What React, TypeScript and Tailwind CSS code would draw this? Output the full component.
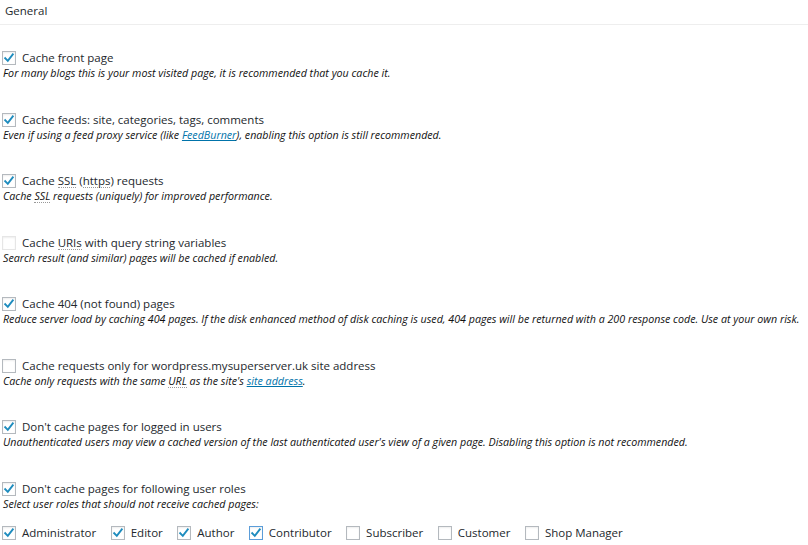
import React from 'react';

type Box = { checked?: boolean; disabled?: boolean; focused?: boolean };

const CheckBox = ({ checked, disabled, focused }: Box) => (
  <span
    className={`inline-flex items-center justify-center w-[14px] h-[14px] shrink-0 bg-white border shadow-[inset_0_1px_2px_rgba(0,0,0,0.07)] ${
      disabled ? 'border-[#e6e6e6] bg-[#fdfdfd]' : focused ? 'border-[#5b9dd9] shadow-[0_0_2px_rgba(30,140,190,0.8)]' : 'border-[#b4b9be]'
    }`}
  >
    {checked && (
      <svg width="12" height="12" viewBox="0 0 12 12" fill="none">
        <path d="M2.2 6.2 L4.8 8.8 L9.8 2.4" stroke="#1e8cbe" strokeWidth="1.9" strokeLinecap="square" />
      </svg>
    )}
  </span>
);

const Abbr = ({ children }: { children: React.ReactNode }) => (
  <span className="border-b border-dotted border-[#999] leading-[12px] inline-block">{children}</span>
);

const Link = ({ children }: { children: React.ReactNode }) => (
  <span className="text-[#0073aa] underline">{children}</span>
);

const Option = ({ box, label, desc }: { box: Box; label: React.ReactNode; desc: React.ReactNode }) => (
  <div className="mb-[31.5px]">
    <div className="flex items-center gap-[6px] pl-[2px] leading-[16px] text-[11.5px] text-[#23282d]">
      <CheckBox {...box} />
      <span>{label}</span>
    </div>
    <p className="pl-[3px] leading-[14px] text-[10.7px] italic text-[#111] whitespace-nowrap">{desc}</p>
  </div>
);

const roles = [
  { name: 'Administrator', checked: true },
  { name: 'Editor', checked: true },
  { name: 'Author', checked: true },
  { name: 'Contributor', checked: true, focused: true },
  { name: 'Subscriber', checked: false },
  { name: 'Customer', checked: false },
  { name: 'Shop Manager', checked: false },
];

export default function App() {
  return (
    <div className="w-[808px] h-[545px] bg-white overflow-hidden" style={{ fontFamily: '"Open Sans", "Liberation Sans", sans-serif' }}>
      <div className="h-[25px] border-b border-[#eeeeee] pl-[5px] pt-[2px] text-[11.5px] leading-[18px] text-[#23282d]">General</div>

      <div className="pt-[25px]">
        <Option
          box={{ checked: true }}
          label="Cache front page"
          desc="For many blogs this is your most visited page, it is recommended that you cache it."
        />
        <Option
          box={{ checked: true }}
          label="Cache feeds: site, categories, tags, comments"
          desc={<>Even if using a feed proxy service (like <Link>FeedBurner</Link>), enabling this option is still recommended.</>}
        />
        <Option
          box={{ checked: true }}
          label={<>Cache <Abbr>SSL</Abbr> (<Abbr>https</Abbr>) requests</>}
          desc={<>Cache <Abbr>SSL</Abbr> requests (uniquely) for improved performance.</>}
        />
        <Option
          box={{ disabled: true }}
          label={<>Cache <Abbr>URIs</Abbr> with query string variables</>}
          desc="Search result (and similar) pages will be cached if enabled."
        />
        <Option
          box={{ checked: true }}
          label="Cache 404 (not found) pages"
          desc="Reduce server load by caching 404 pages. If the disk enhanced method of disk caching is used, 404 pages will be returned with a 200 response code. Use at your own risk."
        />
        <Option
          box={{}}
          label="Cache requests only for wordpress.mysuperserver.uk site address"
          desc={<>Cache only requests with the same <Abbr>URL</Abbr> as the site's <Link>site address</Link>.</>}
        />
        <Option
          box={{ checked: true }}
          label="Don't cache pages for logged in users"
          desc="Unauthenticated users may view a cached version of the last authenticated user's view of a given page. Disabling this option is not recommended."
        />
        <div>
          <div className="flex items-center gap-[6px] pl-[2px] leading-[16px] text-[11.5px] text-[#23282d]">
            <CheckBox checked />
            <span>Don't cache pages for following user roles</span>
          </div>
          <p className="pl-[3px] leading-[14px] text-[10.7px] italic text-[#111]">Select user roles that should not receive cached pages:</p>
          <div className="mt-[14px] flex items-center pl-[2px] text-[11.5px] leading-[16px] text-[#23282d]">
            {roles.map(r => (
              <label key={r.name} className="flex items-center gap-[6px] mr-[14.5px]">
                <CheckBox checked={r.checked} focused={r.focused} />
                <span>{r.name}</span>
              </label>
            ))}
          </div>
        </div>
      </div>
    </div>
  );
}
